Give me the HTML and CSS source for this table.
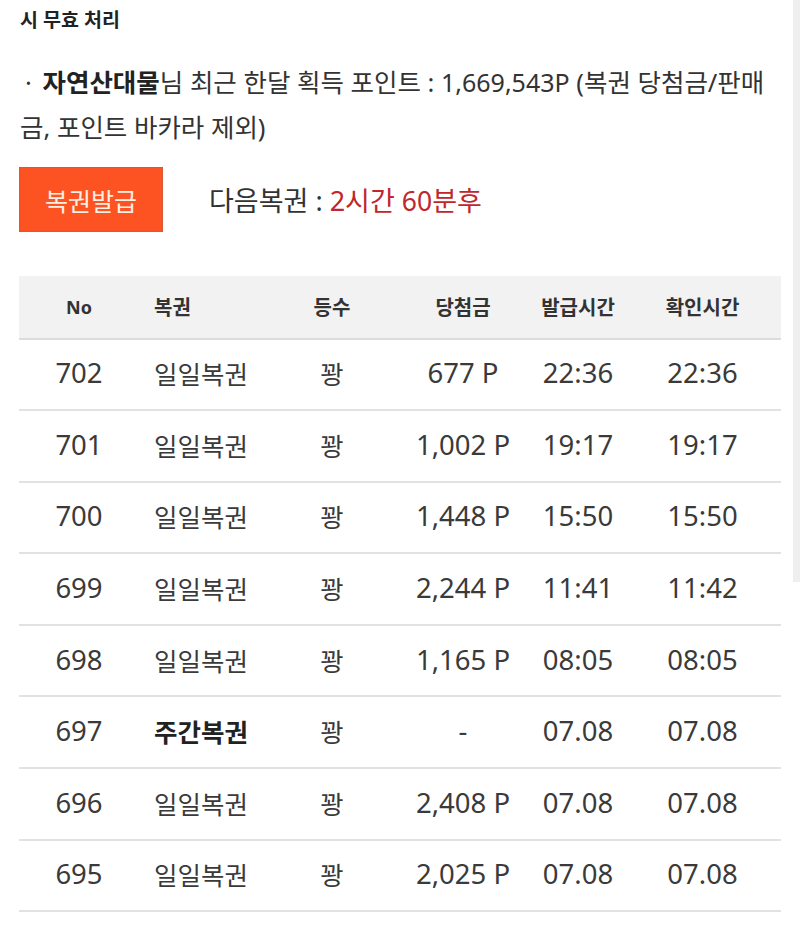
FILE: index.html
```html
<!DOCTYPE html>
<html lang="ko">
<head>
<meta charset="utf-8">
<link rel="stylesheet" href="styles.css">
</head>
<body>
<div class="page">
  <div class="notice">시 무효 처리</div>
  <p class="points"><span class="bullet">·</span> <b>자연산대물</b>님 최근 한달 획득 포인트 : <span class="num">1,669,543P</span> (복권 당첨금/판매금, 포인트 바카라 제외)</p>
  <div class="issue-row">
    <button class="issue-btn">복권발급</button>
    <div class="next">다음복권 : <span class="next-time">2시간 <span class="num">60</span>분후</span></div>
  </div>
  <table class="lotto">
    <colgroup>
      <col class="c-no"><col class="c-name"><col class="c-rank"><col class="c-prize"><col class="c-issue"><col class="c-check">
    </colgroup>
    <thead>
      <tr><th class="latin">No</th><th class="left">복권</th><th>등수</th><th>당첨금</th><th>발급시간</th><th>확인시간</th></tr>
    </thead>
    <tbody>
      <tr><td>702</td><td class="left ko">일일복권</td><td class="ko">꽝</td><td>677 P</td><td>22:36</td><td>22:36</td></tr>
      <tr><td>701</td><td class="left ko">일일복권</td><td class="ko">꽝</td><td>1,002 P</td><td>19:17</td><td>19:17</td></tr>
      <tr><td>700</td><td class="left ko">일일복권</td><td class="ko">꽝</td><td>1,448 P</td><td>15:50</td><td>15:50</td></tr>
      <tr><td>699</td><td class="left ko">일일복권</td><td class="ko">꽝</td><td>2,244 P</td><td>11:41</td><td>11:42</td></tr>
      <tr><td>698</td><td class="left ko">일일복권</td><td class="ko">꽝</td><td>1,165 P</td><td>08:05</td><td>08:05</td></tr>
      <tr><td>697</td><td class="left ko strong">주간복권</td><td class="ko">꽝</td><td>-</td><td>07.08</td><td>07.08</td></tr>
      <tr><td>696</td><td class="left ko">일일복권</td><td class="ko">꽝</td><td>2,408 P</td><td>07.08</td><td>07.08</td></tr>
      <tr><td>695</td><td class="left ko">일일복권</td><td class="ko">꽝</td><td>2,025 P</td><td>07.08</td><td>07.08</td></tr>
    </tbody>
  </table>
</div>
<div class="scrollbar"></div>
</body>
</html>
```
FILE: styles.css
```css
html, body {
  margin: 0;
  padding: 0;
  background: #fff;
}
body {
  font-family: "Noto Sans", "Noto Sans CJK KR", sans-serif;
  color: #333;
  width: 800px;
  height: 926px;
  overflow: hidden;
}
.page {
  padding: 0 19px;
  width: 762px;
}
.notice {
  font-size: 19.5px;
  font-weight: 700;
  line-height: 40px;
  color: #222;
  padding-left: 1px;
}
.points {
  margin: 19.5px 0 0 0;
  font-size: 25.5px;
  line-height: 45px;
  color: #333;
  padding-left: 1px;
  width: 760px;
}
.points .bullet {
  margin: 0 4px 0 5px;
}
.points .num {
  font-size: 25px;
}
.points b {
  font-weight: 700;
  color: #222;
}
.issue-row {
  margin-top: 17.5px;
  display: flex;
  align-items: center;
  gap: 46px;
}
.issue-btn {
  width: 144px;
  height: 65px;
  background: #fd5323;
  border: 1px solid #d65a37;
  color: #fbeee2;
  font-family: "Noto Sans CJK KR", sans-serif;
  font-size: 25px;
  padding: 0;
  margin: 0;
}
.next {
  font-size: 27px;
  color: #333;
}
.next .num {
  font-size: 26.5px;
}
.next-time {
  color: #c0262c;
}
.lotto {
  margin-top: 43.5px;
  width: 762px;
  border-collapse: collapse;
  table-layout: fixed;
}
.c-no { width: 120px; }
.c-name { width: 131px; }
.c-rank { width: 124px; }
.c-prize { width: 138px; }
.c-issue { width: 92px; }
.c-check { width: 157px; }
.lotto th {
  background: #f2f2f2;
  height: 62px;
  padding: 0;
  font-size: 20px;
  font-weight: 700;
  color: #333;
  text-align: center;
  border-bottom: 2px solid #dcdcdc;
}
.lotto th.latin {
  font-size: 18px;
}
.lotto td {
  height: 66.6px;
  padding: 0 0 3px 0;
  font-size: 27.5px;
  color: #3a3a3a;
  text-align: center;
  border-bottom: 2px solid #e2e2e2;
}
.lotto td.ko {
  font-size: 25.5px;
}
.lotto .left {
  text-align: left;
  padding-left: 15px;
}
.lotto td.strong {
  font-weight: 700;
  color: #222;
}
.scrollbar {
  position: absolute;
  top: 0;
  right: 0;
  width: 7px;
  height: 582px;
  background: #efefef;
}
```
